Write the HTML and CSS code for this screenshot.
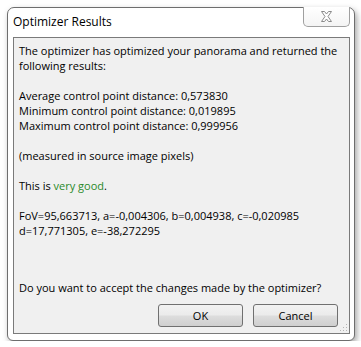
FILE: index.html
```html
<!DOCTYPE html>
<html lang="en">
<head>
    <meta charset="UTF-8">
    <title>Optimizer Results</title>
    <link rel="stylesheet" href="styles.css">
</head>
<body>
    <div class="window">
        <!-- Заголовок окна -->
        <div class="titlebar">
            <span class="title">Optimizer Results</span>
            <div class="close">
                <svg width="13" height="11" viewBox="0 0 13 11">
                    <path d="M1.5 0.5 H4.5 L6.5 3 L8.5 0.5 H11.5 L8 5.5 L11.5 10.5 H8.5 L6.5 8 L4.5 10.5 H1.5 L5 5.5 Z" fill="#fff" stroke="#8a8a8a" stroke-width="1"/>
                </svg>
            </div>
        </div>

        <!-- Клиентская область -->
        <div class="client">
            <div class="message">
                <p>The optimizer has optimized your panorama and returned the following results:</p>
                <p>Average control point distance: 0,573830<br>
                Minimum control point distance: 0,019895<br>
                Maximum control point distance: 0,999956</p>
                <p>(measured in source image pixels)</p>
                <p>This is <span class="good">very good</span>.</p>
                <p>FoV=95,663713, a=-0,004306, b=0,004938, c=-0,020985<br>
                d=17,771305, e=-38,272295</p>
            </div>
            <p class="question">Do you want to accept the changes made by the optimizer?</p>
            <div class="buttons">
                <button type="button">OK</button>
                <button type="button">Cancel</button>
            </div>
            <svg class="grip" width="8" height="8" viewBox="0 0 8 8">
                <rect x="6" y="0" width="1" height="1" fill="#b4b4b4"/>
                <rect x="3" y="3" width="1" height="1" fill="#b4b4b4"/>
                <rect x="6" y="3" width="1" height="1" fill="#b4b4b4"/>
                <rect x="0" y="6" width="1" height="1" fill="#b4b4b4"/>
                <rect x="3" y="6" width="1" height="1" fill="#b4b4b4"/>
                <rect x="6" y="6" width="1" height="1" fill="#b4b4b4"/>
            </svg>
        </div>
    </div>
</body>
</html>
```

FILE: styles.css
```css
/* Общие стили */
body {
    margin: 0;
    background-color: #fff;
    font-family: "Open Sans", "Noto Sans", sans-serif;
    font-size: 11px;
    color: #000;
}

/* Рамка окна */
.window {
    box-sizing: border-box;
    width: 348px;
    height: 334px;
    margin: 7px 0 0 7px;
    padding: 0 4px 0 5px;
    border: 1px solid #6e6e6e;
    border-radius: 7px 7px 6px 6px;
    background-color: #fff;
    box-shadow: 2px 3px 6px rgba(0, 0, 0, 0.35);
}

/* Заголовок */
.titlebar {
    display: flex;
    justify-content: space-between;
    height: 29px;
}

.title {
    padding-top: 6px;
    font-size: 12px;
    line-height: 15px;
}

.close {
    box-sizing: border-box;
    width: 47px;
    height: 20px;
    margin-top: -1px;
    display: flex;
    align-items: center;
    justify-content: center;
    border: 1px solid #a0a0a0;
    border-top: none;
    border-radius: 0 0 5px 5px;
    background: linear-gradient(#fff, #f4f4f4);
}

/* Клиентская область */
.client {
    position: relative;
    box-sizing: border-box;
    height: 297px;
    padding: 5px 5px 6px 5px;
    border: 1px solid #7a7a7a;
    background-color: #f0f0f0;
    display: flex;
    flex-direction: column;
    line-height: 15px;
}

.message p {
    margin: 0 0 15px 0;
}

.good {
    color: #2a8a2a;
}

.question {
    margin: auto 0 0 0;
}

/* Кнопки */
.buttons {
    display: flex;
    justify-content: flex-end;
    gap: 10px;
    margin-top: 9px;
    padding-right: 6px;
}

button {
    box-sizing: border-box;
    width: 85px;
    height: 23px;
    padding: 0;
    border: 1px solid #707070;
    border-radius: 3px;
    background: linear-gradient(#f2f2f2 0%, #ebebeb 48%, #dddddd 52%, #cfcfcf 100%);
    font-family: inherit;
    font-size: 11px;
    color: #000;
}

.grip {
    position: absolute;
    right: 1px;
    bottom: 1px;
}
```
